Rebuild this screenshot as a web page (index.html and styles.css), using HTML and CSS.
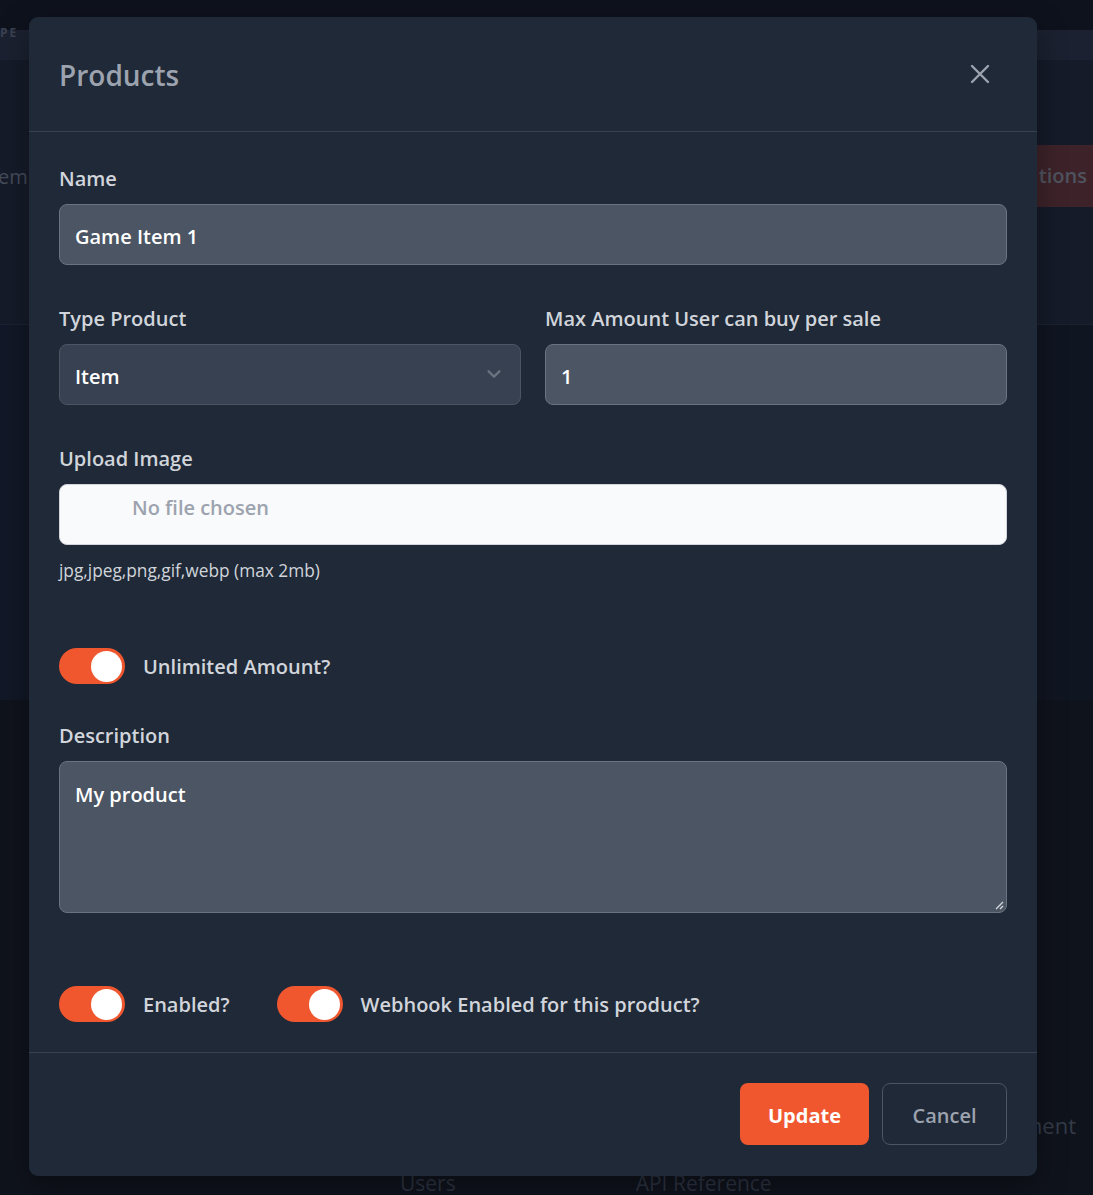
FILE: index.html
```html
<!DOCTYPE html>
<html lang="en">
<head>
<meta charset="utf-8">
<title>Products</title>
<link rel="stylesheet" href="styles.css">
</head>
<body>
<div class="page">
  <div class="bg-top"></div>
  <div class="bg-bar"><span class="bg-brand">PE</span></div>
  <div class="bg-hero">
    <span class="bg-tab">em</span>
    <span class="bg-btn">tions</span>
  </div>
  <div class="bg-main">
    <div class="bg-image"></div>
    <div class="bg-footer">
      <div class="bg-footer-right">ment</div>
      <div class="bg-links"><span>Users</span><span>API Reference</span></div>
    </div>
  </div>
</div>

<div class="modal">
  <div class="modal-header">
    <h2 class="modal-title">Products</h2>
    <button class="close" type="button" aria-label="Close">
      <svg width="22" height="22" viewBox="0 0 22 22" fill="none" stroke="currentColor" stroke-width="2.4" stroke-linecap="round"><path d="M3 3L19 19M19 3L3 19"/></svg>
    </button>
  </div>
  <div class="modal-body">
    <div class="field">
      <label class="label">Name</label>
      <div class="input">Game Item 1</div>
    </div>
    <div class="row">
      <div class="field">
        <label class="label">Type Product</label>
        <div class="select">
          <span>Item</span>
          <svg class="chev" width="18" height="18" viewBox="0 0 20 20" fill="none" stroke="currentColor" stroke-width="2.6" stroke-linecap="round" stroke-linejoin="round"><path d="M4 7l6 6 6-6"/></svg>
        </div>
      </div>
      <div class="field">
        <label class="label">Max Amount User can buy per sale</label>
        <div class="input">1</div>
      </div>
    </div>
    <div class="field">
      <label class="label">Upload Image</label>
      <div class="file"><span class="file-text">No file chosen</span></div>
      <p class="help">jpg,jpeg,png,gif,webp (max 2mb)</p>
    </div>
    <div class="toggle-row unlimited">
      <div class="toggle-item"><span class="switch"><span class="knob"></span></span><span class="toggle-label">Unlimited Amount?</span></div>
    </div>
    <div class="field">
      <label class="label">Description</label>
      <div class="textarea">My product
        <svg class="grip" width="10" height="10" viewBox="0 0 10 10" stroke="#d1d5db" stroke-width="1.4"><path d="M9 2L2 9M9 6L6 9"/></svg>
      </div>
    </div>
    <div class="toggle-row last">
      <div class="toggle-item"><span class="switch"><span class="knob"></span></span><span class="toggle-label">Enabled?</span></div>
      <div class="toggle-item"><span class="switch"><span class="knob"></span></span><span class="toggle-label">Webhook Enabled for this product?</span></div>
    </div>
  </div>
  <div class="modal-footer">
    <button class="btn btn-primary" type="button">Update</button>
    <button class="btn btn-outline" type="button">Cancel</button>
  </div>
</div>
</body>
</html>
```

FILE: styles.css
```css
* { box-sizing: border-box; }
html, body { margin: 0; padding: 0; }
body {
  background: #10141e;
  font-family: "Segoe UI", "Open Sans", "Noto Sans", sans-serif;
  width: 1093px;
  height: 1195px;
  overflow: hidden;
  position: relative;
}

/* dimmed page behind the modal */
.page { display: flex; flex-direction: column; height: 1195px; }
.bg-top { height: 30px; background: #0e121d; }
.bg-bar { height: 30px; background: #1b2130; display: flex; align-items: center; }
.bg-brand { color: #3a4252; font-size: 12px; letter-spacing: 2px; font-weight: 700; margin-top: -26px; }
.bg-hero {
  height: 265px;
  background: #151b29;
  display: flex;
  justify-content: space-between;
  align-items: flex-start;
  padding-top: 85px;
  border-bottom: 1px solid #1c2231;
}
.bg-tab { color: #444b59; font-size: 20px; line-height: 64px; margin-left: -2px; }
.bg-btn {
  background: #3d2329;
  color: #4f535f;
  font-size: 20px;
  font-weight: 600;
  line-height: 62px;
  padding: 0 6px 0 10px;
}
.bg-main { flex: 1; display: flex; flex-direction: column; background: #11151f; }
.bg-image { height: 375px; background: linear-gradient(90deg, #121827, #0f141e 40%, #101522); }
.bg-footer { flex: 1; display: flex; flex-direction: column; justify-content: flex-end; background: #0f131c; }
.bg-footer-right { align-self: flex-end; color: #343b48; font-size: 22px; line-height: 28px; margin-right: 17px; margin-bottom: 34px; }
.bg-links { display: flex; gap: 180px; padding-left: 400px; color: #2b3240; font-size: 21px; line-height: 20px; padding-bottom: 2px; }

/* modal */
.modal {
  position: absolute;
  left: 29px;
  top: 17px;
  width: 1008px;
  background: #1f2937;
  border-radius: 9px;
  box-shadow: 0 10px 30px rgba(0,0,0,0.35);
}
.modal-header {
  height: 115px;
  border-bottom: 1px solid #374151;
  display: flex;
  align-items: center;
  justify-content: space-between;
  padding: 0 46px 0 30px;
}
.modal-title {
  margin: 0;
  margin-top: 1px;
  font-size: 28px;
  font-weight: 600;
  color: #9ca3af;
}
.close {
  background: none;
  border: 0;
  padding: 0;
  color: #9ca3af;
  display: flex;
  margin-top: -1px;
}

.modal-body { padding: 33px 30px 30px; }
.field { display: flex; flex-direction: column; }
.label {
  font-size: 20px;
  line-height: 28px;
  font-weight: 600;
  color: #d1d5db;
  margin-bottom: 11px;
}
.input, .select, .textarea {
  height: 61px;
  border-radius: 8px;
  border: 1px solid #6b7280;
  background: #4b5563;
  color: #ffffff;
  font-size: 20px;
  font-weight: 600;
  padding: 3px 15px 0;
  display: flex;
  align-items: center;
}
.row {
  display: grid;
  grid-template-columns: 1fr 1fr;
  gap: 24px;
  margin-top: 40px;
}
.select {
  background: #374151;
  border-color: #4b5563;
  justify-content: space-between;
  padding-right: 17px;
}
.chev { color: #6b7280; margin-top: -4px; }
.row + .field { margin-top: 40px; }
.file {
  height: 61px;
  border-radius: 8px;
  border: 1px solid #d1d5db;
  background: #f9fafb;
  padding: 9px 0 0 72px;
}
.file-text { color: #9ca3af; font-size: 20px; font-weight: 600; line-height: 28px; }
.help {
  margin: 14px 0 0;
  font-size: 17.3px;
  line-height: 24px;
  color: #d1d5db;
}
.toggle-row { display: flex; align-items: center; gap: 47px; }
.unlimited { margin-top: 65px; margin-bottom: 38px; }
.last { margin-top: 73px; }
.toggle-item { display: flex; align-items: center; gap: 18px; }
.switch {
  width: 66px;
  height: 36px;
  border-radius: 18px;
  background: #f0572f;
  display: flex;
  align-items: center;
  justify-content: flex-end;
  padding-right: 3px;
}
.knob { width: 31px; height: 31px; border-radius: 50%; background: #ffffff; }
.toggle-label { font-size: 20px; font-weight: 600; color: #d1d5db; line-height: 28px; padding-top: 2px; }
.textarea {
  height: 152px;
  align-items: flex-start;
  padding-top: 19px;
  position: relative;
}
.grip { position: absolute; right: 2px; bottom: 2px; }

.modal-footer {
  border-top: 1px solid #374151;
  padding: 30px 30px 31px;
  display: flex;
  justify-content: flex-end;
  gap: 13px;
}
.btn {
  height: 62px;
  border-radius: 8px;
  font-family: inherit;
  font-size: 20px;
  font-weight: 700;
  padding: 2px 0 0;
}
.btn-primary { background: #f0572f; color: #ffffff; border: 0; width: 129px; }
.btn-outline { background: transparent; color: #9ca3af; border: 1px solid #4b5563; font-weight: 600; width: 125px; }
```
